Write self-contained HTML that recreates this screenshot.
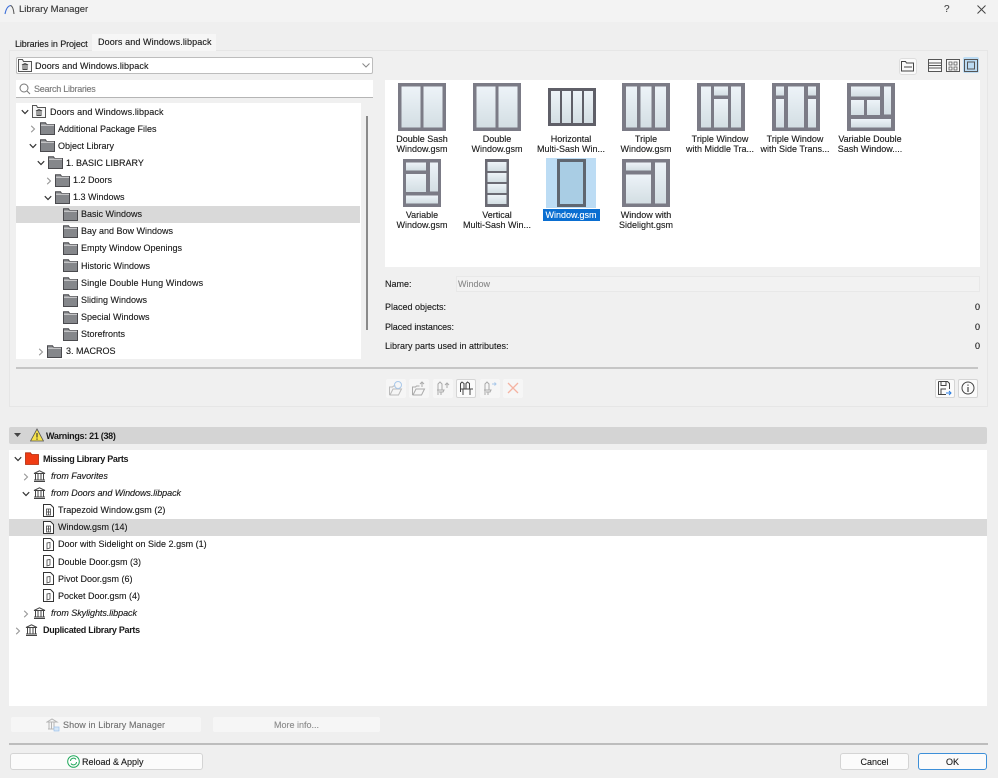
<!DOCTYPE html>
<html><head><meta charset="utf-8"><style>
html,body{margin:0;padding:0}
body{width:998px;height:778px;position:relative;overflow:hidden;background:#efefef;font:9px "Liberation Sans",sans-serif;color:#181818}
#r{position:absolute;left:0;top:0;width:998px;height:778px;overflow:hidden;filter:blur(.35px)}
.a,.t,svg.i{position:absolute}
.t{white-space:nowrap;line-height:12px;height:12px;-webkit-text-stroke:.12px currentColor}
.c{text-align:center;width:74px}
.d{color:#8a8a8a}
.b{font-weight:bold;letter-spacing:-.3px;-webkit-text-stroke:0}
.w{letter-spacing:.1px}
.btn{position:absolute;box-sizing:border-box;background:#fbfbfb;border:1px solid #d4d4d4;border-radius:3px;text-align:center;line-height:14px}
.tb{position:absolute;box-sizing:border-box;width:20px;height:19px;top:379px;background:#f6f6f6;border-radius:2px}
</style></head><body>
<svg width="0" height="0" style="position:absolute"><defs>
<linearGradient id="g" x1="0" y1="0" x2="0" y2="1"><stop offset="0" stop-color="#edf3f8"/><stop offset="1" stop-color="#d3dee3"/></linearGradient>
<symbol id="f" viewBox="0 0 15 13"><path d="M.5 12.500V.8h5l1.200 1.700h7.800v10z" fill="#85878b" stroke="#4a4a4e"/><path d="M1 3.200h13" stroke="#dfdfdf"/></symbol>
<symbol id="lib" viewBox="0 0 14 13"><path d="M.5 12.500V.5h4l1 2h8v10z" fill="#f7f7f7" stroke="#555"/><path d="M4 6l3-1.500L10 6zM4.500 10.500h5M5 7v3M7 7v3M9 7v3" fill="none" stroke="#444"/></symbol>
<symbol id="bank" viewBox="0 0 13 12"><path d="M1 3.500L6.500 .8 12 3.500zM1 11.500h11M1 10h11M2.500 4v6M5 4v6M8 4v6M10.500 4v6" fill="none" stroke="#444"/></symbol>
<symbol id="doc" viewBox="0 0 11 13"><path d="M.5 .5h7l3 3v9H.5z" fill="#fff" stroke="#333"/><path d="M3.500 5h4v6h-4zM5.500 5v6M3.500 8h4" fill="none" stroke="#444" stroke-width=".8"/></symbol>
<symbol id="dc" viewBox="0 0 11 13"><path d="M.5 .5h7l3 3v9H.5z" fill="#fff" stroke="#333"/><path d="M4 11V5l3-.5V10z" fill="none" stroke="#444" stroke-width=".8"/></symbol>
<symbol id="down" viewBox="0 0 8 6"><path d="M.8 1.200L4 4.500l3.200-3.300" fill="none" stroke="#333" stroke-width="1.200"/></symbol>
<symbol id="right" viewBox="0 0 6 8"><path d="M1.200 .8L4.500 4 1.200 7.200" fill="none" stroke="#999" stroke-width="1.100"/></symbol>
<symbol id="w1" viewBox="0 0 48 48"><rect width="48" height="48" fill="#7b7b86"/><rect x="3.500" y="3.500" width="19" height="41" fill="url(#g)"/><rect x="25.500" y="3.500" width="19" height="41" fill="url(#g)"/></symbol>
<symbol id="w3" viewBox="0 0 48 38"><rect width="48" height="38" fill="#5f5f68"/><rect x="3" y="3" width="9" height="32" fill="url(#g)"/><rect x="14" y="3" width="9" height="32" fill="url(#g)"/><rect x="25" y="3" width="9" height="32" fill="url(#g)"/><rect x="36" y="3" width="9" height="32" fill="url(#g)"/></symbol>
<symbol id="w4" viewBox="0 0 48 48"><rect width="48" height="48" fill="#7b7b86"/><rect x="4" y="3.500" width="11" height="41" fill="url(#g)"/><rect x="18.500" y="3.500" width="11" height="41" fill="url(#g)"/><rect x="33" y="3.500" width="11" height="41" fill="url(#g)"/></symbol>
<symbol id="w5" viewBox="0 0 48 48"><rect width="48" height="48" fill="#7b7b86"/><rect x="4" y="3.500" width="10" height="41" fill="url(#g)"/><rect x="17" y="3.500" width="14" height="9" fill="url(#g)"/><rect x="17" y="16" width="14" height="28.500" fill="url(#g)"/><rect x="34" y="3.500" width="10" height="41" fill="url(#g)"/></symbol>
<symbol id="w6" viewBox="0 0 48 48"><rect width="48" height="48" fill="#7b7b86"/><rect x="4" y="3.500" width="8" height="9" fill="url(#g)"/><rect x="4" y="16" width="8" height="28.500" fill="url(#g)"/><rect x="16" y="3.500" width="16" height="41" fill="url(#g)"/><rect x="36" y="3.500" width="8" height="9" fill="url(#g)"/><rect x="36" y="16" width="8" height="28.500" fill="url(#g)"/></symbol>
<symbol id="w7" viewBox="0 0 48 48"><rect width="48" height="48" fill="#7b7b86"/><rect x="4" y="3.500" width="29" height="10" fill="url(#g)"/><rect x="37" y="3.500" width="7" height="28" fill="url(#g)"/><rect x="4" y="17" width="13" height="15" fill="url(#g)"/><rect x="20" y="17" width="13" height="15" fill="url(#g)"/><rect x="4" y="36" width="40" height="8.500" fill="url(#g)"/></symbol>
<symbol id="w8" viewBox="0 0 38 48"><rect width="38" height="48" fill="#7b7b86"/><rect x="3" y="3.500" width="20" height="8" fill="url(#g)"/><rect x="27" y="3.500" width="8" height="29" fill="url(#g)"/><rect x="3" y="15" width="20" height="18" fill="url(#g)"/><rect x="3" y="36.500" width="32" height="8" fill="url(#g)"/></symbol>
<symbol id="w9" viewBox="0 0 24 48"><rect width="24" height="48" fill="#6a6a73"/><rect x="2.500" y="3" width="19" height="9" fill="url(#g)"/><rect x="2.500" y="14" width="19" height="9" fill="url(#g)"/><rect x="2.500" y="25" width="19" height="9" fill="url(#g)"/><rect x="2.500" y="36" width="19" height="9" fill="url(#g)"/></symbol>
<symbol id="w11" viewBox="0 0 48 48"><rect width="48" height="48" fill="#7b7b86"/><rect x="4" y="3.500" width="25" height="8" fill="url(#g)"/><rect x="33" y="3.500" width="11" height="41" fill="url(#g)"/><rect x="4" y="15.500" width="25" height="29" fill="url(#g)"/></symbol>
</defs></svg>
<div id="r">
<!-- title bar -->
<div class="a" style="left:0;top:0;width:998px;height:22px;background:#f3f3f3"></div>
<svg class="i" style="left:4px;top:4px" width="11" height="11" viewBox="0 0 11 11"><path d="M1 10C2 5 4 2 6.500 1.500" fill="none" stroke="#3d6fd8" stroke-width="1.100"/><path d="M6.500 1.500C8.500 2 9.500 5 10 10" fill="none" stroke="#555" stroke-width="1"/></svg>
<div class="t" style="left:19px;top:4px;color:#333;font-size:9.500px">Library Manager</div>
<div class="t" style="left:944px;top:4px;font-size:10px;color:#444">?</div>
<svg class="i" style="left:977px;top:5px" width="9" height="9" viewBox="0 0 9 9"><path d="M.5 .5l8 8M8.500 .5l-8 8" stroke="#444" fill="none"/></svg>

<!-- tabs & upper panel -->
<div class="a" style="left:9px;top:50px;width:979px;height:357px;box-sizing:border-box;background:#f0f0f0;border:1px solid #e6e6e6"></div>
<div class="a" style="left:92px;top:34px;width:124px;height:17px;background:#f6f6f6"></div>
<div class="t" style="left:15px;top:38px;letter-spacing:-.1px">Libraries in Project</div>
<div class="t w" style="left:98px;top:36px">Doors and Windows.libpack</div>

<!-- dropdown -->
<div class="a" style="left:16px;top:57px;width:357px;height:17px;box-sizing:border-box;background:#fff;border:1px solid #bdbdbd;border-radius:2px"></div>
<svg class="i" style="left:18px;top:59px" width="14" height="13"><use href="#lib"/></svg>
<div class="t w" style="left:35px;top:60px">Doors and Windows.libpack</div>
<svg class="i" style="left:362px;top:63px" width="8" height="5" viewBox="0 0 8 5"><path d="M.5 .5L4 4 7.500 .5" fill="none" stroke="#888"/></svg>

<!-- search -->
<div class="a" style="left:16px;top:80px;width:357px;height:18px;box-sizing:border-box;background:#fff;border-bottom:1px solid #b5b5b5"></div>
<svg class="i" style="left:19px;top:83px" width="12" height="12" viewBox="0 0 12 12"><circle cx="5" cy="5" r="4" fill="none" stroke="#777"/><path d="M8 8l3 3" stroke="#777"/></svg>
<div class="t" style="left:34px;top:83px;color:#777;letter-spacing:-.25px">Search Libraries</div>

<!-- tree -->
<div class="a" style="left:16px;top:103px;width:345px;height:256px;background:#fff"></div>
<div class="a" style="left:16px;top:206px;width:344px;height:17px;background:#d9d9d9"></div>
<div class="a" style="left:366px;top:116px;width:2px;height:214px;background:#8a8a8a"></div>

<svg class="i" style="left:21px;top:109px" width="8" height="6"><use href="#down"/></svg>
<svg class="i" style="left:32px;top:105px" width="14" height="13"><use href="#lib"/></svg>
<div class="t w" style="left:50px;top:106px">Doors and Windows.libpack</div>

<svg class="i" style="left:30px;top:125px" width="6" height="8"><use href="#right"/></svg>
<svg class="i" style="left:40px;top:122px" width="15" height="13"><use href="#f"/></svg>
<div class="t" style="left:58px;top:123px">Additional Package Files</div>

<svg class="i" style="left:29px;top:143px" width="8" height="6"><use href="#down"/></svg>
<svg class="i" style="left:40px;top:139px" width="15" height="13"><use href="#f"/></svg>
<div class="t" style="left:58px;top:140px">Object Library</div>

<svg class="i" style="left:37px;top:160px" width="8" height="6"><use href="#down"/></svg>
<svg class="i" style="left:48px;top:156px" width="15" height="13"><use href="#f"/></svg>
<div class="t" style="left:66px;top:157px">1. BASIC LIBRARY</div>

<svg class="i" style="left:46px;top:177px" width="6" height="8"><use href="#right"/></svg>
<svg class="i" style="left:55px;top:174px" width="15" height="13"><use href="#f"/></svg>
<div class="t" style="left:73px;top:174px">1.2 Doors</div>

<svg class="i" style="left:44px;top:195px" width="8" height="6"><use href="#down"/></svg>
<svg class="i" style="left:55px;top:191px" width="15" height="13"><use href="#f"/></svg>
<div class="t" style="left:73px;top:191px">1.3 Windows</div>

<svg class="i" style="left:63px;top:208px" width="15" height="13"><use href="#f"/></svg>
<div class="t" style="left:81px;top:208px">Basic Windows</div>
<svg class="i" style="left:63px;top:225px" width="15" height="13"><use href="#f"/></svg>
<div class="t" style="left:81px;top:225px">Bay and Bow Windows</div>
<svg class="i" style="left:63px;top:242px" width="15" height="13"><use href="#f"/></svg>
<div class="t" style="left:81px;top:242px">Empty Window Openings</div>
<svg class="i" style="left:63px;top:259px" width="15" height="13"><use href="#f"/></svg>
<div class="t" style="left:81px;top:260px">Historic Windows</div>
<svg class="i" style="left:63px;top:277px" width="15" height="13"><use href="#f"/></svg>
<div class="t" style="left:81px;top:277px;letter-spacing:.12px">Single Double Hung Windows</div>
<svg class="i" style="left:63px;top:294px" width="15" height="13"><use href="#f"/></svg>
<div class="t" style="left:81px;top:294px">Sliding Windows</div>
<svg class="i" style="left:63px;top:311px" width="15" height="13"><use href="#f"/></svg>
<div class="t" style="left:81px;top:311px">Special Windows</div>
<svg class="i" style="left:63px;top:328px" width="15" height="13"><use href="#f"/></svg>
<div class="t" style="left:81px;top:328px">Storefronts</div>
<svg class="i" style="left:38px;top:348px" width="6" height="8"><use href="#right"/></svg>
<svg class="i" style="left:47px;top:345px" width="15" height="13"><use href="#f"/></svg>
<div class="t" style="left:66px;top:345px">3. MACROS</div>

<!-- right toolbar -->
<div class="a" style="left:899px;top:58px;width:16px;height:15px;background:#fafafa;border-radius:3px;border:1px solid #ddd"></div>
<svg class="i" style="left:901px;top:60px" width="13" height="12" viewBox="0 0 13 12"><path d="M.5 11V1.500h4l1 1.500h7v8zM3 7h8" fill="none" stroke="#444"/></svg>
<svg class="i" style="left:928px;top:59px" width="14" height="13" viewBox="0 0 14 13"><rect x=".5" y=".5" width="13" height="12" fill="#fafafa" stroke="#555"/><path d="M1 4h12M1 6.500h12M1 9h12" stroke="#555"/></svg>
<svg class="i" style="left:946px;top:59px" width="14" height="13" viewBox="0 0 14 13"><rect x=".5" y=".5" width="13" height="12" fill="#fafafa" stroke="#555"/><path d="M3 3h3v3H3zM8 3h3v3H8zM3 8h3v3H3zM8 8h3v3H8z" fill="none" stroke="#555" stroke-width=".8"/></svg>
<div class="a" style="left:963px;top:57px;width:16px;height:16px;background:#bcdcf4;border-radius:2px"></div>
<svg class="i" style="left:964px;top:59px" width="14" height="13" viewBox="0 0 14 13"><rect x=".5" y=".5" width="13" height="12" fill="none" stroke="#555"/><rect x="3.500" y="3" width="7" height="7" fill="none" stroke="#555"/></svg>

<!-- thumbnails -->
<div class="a" style="left:385px;top:80px;width:595px;height:187px;background:#fff"></div>
<svg class="i" style="left:398px;top:83px" width="48" height="48"><use href="#w1"/></svg>
<svg class="i" style="left:473px;top:83px" width="48" height="48"><use href="#w1"/></svg>
<svg class="i" style="left:548px;top:88px" width="48" height="38"><use href="#w3"/></svg>
<svg class="i" style="left:622px;top:83px" width="48" height="48"><use href="#w4"/></svg>
<svg class="i" style="left:697px;top:83px" width="48" height="48"><use href="#w5"/></svg>
<svg class="i" style="left:772px;top:83px" width="48" height="48"><use href="#w6"/></svg>
<svg class="i" style="left:847px;top:83px" width="48" height="48"><use href="#w7"/></svg>
<svg class="i" style="left:403px;top:159px" width="38" height="48"><use href="#w8"/></svg>
<svg class="i" style="left:485px;top:159px" width="24" height="48"><use href="#w9"/></svg>
<div class="a" style="left:546px;top:158px;width:50px;height:50px;background:#bcdcf4"></div>
<svg class="i" style="left:557px;top:159px" width="29" height="48" viewBox="0 0 29 48"><rect width="29" height="48" fill="#5f6670"/><rect x="3" y="3" width="23" height="42" fill="#a9cde4"/></svg>
<svg class="i" style="left:622px;top:159px" width="48" height="48"><use href="#w11"/></svg>

<div class="t c" style="left:385px;top:133px">Double Sash</div><div class="t c" style="left:385px;top:143px">Window.gsm</div>
<div class="t c" style="left:460px;top:133px">Double</div><div class="t c" style="left:460px;top:143px">Window.gsm</div>
<div class="t c" style="left:534px;top:133px">Horizontal</div><div class="t c" style="left:534px;top:143px">Multi-Sash Win...</div>
<div class="t c" style="left:609px;top:133px">Triple</div><div class="t c" style="left:609px;top:143px">Window.gsm</div>
<div class="t c" style="left:683px;top:133px">Triple Window</div><div class="t c" style="left:683px;top:143px">with Middle Tra...</div>
<div class="t c" style="left:758px;top:133px">Triple Window</div><div class="t c" style="left:758px;top:143px">with Side Trans...</div>
<div class="t c" style="left:833px;top:133px">Variable Double</div><div class="t c" style="left:833px;top:143px">Sash Window....</div>
<div class="t c" style="left:385px;top:209px">Variable</div><div class="t c" style="left:385px;top:219px">Window.gsm</div>
<div class="t c" style="left:460px;top:209px">Vertical</div><div class="t c" style="left:460px;top:219px">Multi-Sash Win...</div>
<div class="a" style="left:543px;top:209px;width:57px;height:12px;background:#0a6ed1"></div>
<div class="t c" style="left:534px;top:209px;color:#fff">Window.gsm</div>
<div class="t c" style="left:609px;top:209px">Window with</div><div class="t c" style="left:609px;top:219px">Sidelight.gsm</div>

<!-- details -->
<div class="t" style="left:385px;top:278px">Name:</div>
<div class="a" style="left:456px;top:276px;width:524px;height:16px;box-sizing:border-box;background:#f2f2f2;border:1px solid #e8e8e8"></div>
<div class="t d" style="left:458px;top:278px">Window</div>
<div class="t" style="left:385px;top:301px">Placed objects:</div>
<div class="t" style="left:385px;top:321px;letter-spacing:-.1px">Placed instances:</div>
<div class="t" style="left:385px;top:340px">Library parts used in attributes:</div>
<div class="t" style="left:975px;top:301px">0</div>
<div class="t" style="left:975px;top:321px">0</div>
<div class="t" style="left:975px;top:340px">0</div>

<div class="a" style="left:16px;top:367px;width:962px;height:2px;background:#c6c6c6"></div>

<!-- toolbar -->
<div class="tb" style="left:386px"></div>
<svg class="i" style="left:389px;top:381px" width="14" height="15" viewBox="0 0 14 15"><path d="M.5 14V6h3l1-1h2M.5 14h9l3-6H4l-3 6" fill="none" stroke="#bbb"/><circle cx="9" cy="4" r="3.500" fill="none" stroke="#a9c8ea"/></svg>
<div class="tb" style="left:409px"></div>
<svg class="i" style="left:412px;top:381px" width="14" height="15" viewBox="0 0 14 15"><path d="M.5 14V6h3l1-1h3M.5 14h9l3-6H4l-3 6M10 6V1M8 3l2-2 2 2" fill="none" stroke="#aaa"/></svg>
<div class="tb" style="left:433px"></div>
<svg class="i" style="left:436px;top:381px" width="14" height="15" viewBox="0 0 14 15"><path d="M2 14V3l2-2 2 2v6M1 9h7l-1 2H3M5 11v3M11 7V2M9 4l2-2 2 2" fill="none" stroke="#aaa"/></svg>
<div class="tb" style="left:456px;background:#fbfbfb;border:1px solid #d5d5d5"></div>
<svg class="i" style="left:459px;top:381px" width="15" height="15" viewBox="0 0 15 15"><path d="M1.500 11V2.500L3 1l2 1.500V8M7 8V2.500L8.500 1l2 1.500V8M1 8h6M4 8v6M7 8h7M11 8v6" fill="none" stroke="#444"/></svg>
<div class="tb" style="left:480px"></div>
<svg class="i" style="left:483px;top:381px" width="14" height="15" viewBox="0 0 14 15"><path d="M2 14V3l2-2 2 2v6M1 9h7l-1 2H3M5 11v3" fill="none" stroke="#aaa"/><path d="M9 3h4M11.500 1.500L13 3l-1.500 1.500" fill="none" stroke="#a9c8ea"/></svg>
<div class="tb" style="left:503px"></div>
<svg class="i" style="left:507px;top:382px" width="12" height="12" viewBox="0 0 12 12"><path d="M1 1l10 10M11 1L1 11" stroke="#f4b3a2" stroke-width="1.300" fill="none"/></svg>

<div class="tb" style="left:935px;background:#fbfbfb;border:1px solid #d5d5d5"></div>
<svg class="i" style="left:938px;top:381px" width="14" height="15" viewBox="0 0 14 15"><path d="M.5 .5h9l2 2V8M.5 .5v13H8M3 .5v4h5v-4M3 13.500V8h5" fill="none" stroke="#444"/><path d="M8 12h5M11 10l2 2-2 2" fill="none" stroke="#2b7de0"/></svg>
<div class="tb" style="left:958px;background:#fbfbfb;border:1px solid #d5d5d5"></div>
<svg class="i" style="left:961px;top:381px" width="14" height="14" viewBox="0 0 14 14"><circle cx="7" cy="7" r="6" fill="none" stroke="#444"/><path d="M7 6v5M7 3.500v1.300" stroke="#444" stroke-width="1.200"/></svg>

<!-- warnings -->
<div class="a" style="left:9px;top:427px;width:978px;height:17px;background:#d4d4d4;border-radius:2px"></div>
<svg class="i" style="left:14px;top:433px" width="7" height="5" viewBox="0 0 7 5"><path d="M0 0h7L3.500 4z" fill="#444"/></svg>
<svg class="i" style="left:30px;top:428px" width="14" height="14" viewBox="0 0 14 14"><path d="M7 1l6.500 12H.5z" fill="#f6e24a" stroke="#555" stroke-width=".8"/><path d="M7 5v4.500M7 10.500v1.300" stroke="#222"/></svg>
<div class="t b" style="left:46px;top:430px">Warnings: 21 (38)</div>

<div class="a" style="left:9px;top:450px;width:978px;height:256px;background:#fff"></div>
<div class="a" style="left:9px;top:519px;width:978px;height:17px;background:#d9d9d9"></div>

<svg class="i" style="left:14px;top:456px" width="8" height="6"><use href="#down"/></svg>
<svg class="i" style="left:25px;top:452px" width="14" height="13" viewBox="0 0 14 13"><path d="M.5 12.500V.8h5l1.200 1.700h6.800v10z" fill="#f03c14" stroke="#b02808" stroke-width=".8"/></svg>
<div class="t b" style="left:43px;top:453px">Missing Library Parts</div>

<svg class="i" style="left:23px;top:473px" width="6" height="8"><use href="#right"/></svg>
<svg class="i" style="left:33px;top:470px" width="13" height="12"><use href="#bank"/></svg>
<div class="t" style="left:51px;top:470px;font-style:italic;letter-spacing:-.05px">from Favorites</div>
<svg class="i" style="left:22px;top:491px" width="8" height="6"><use href="#down"/></svg>
<svg class="i" style="left:33px;top:487px" width="13" height="12"><use href="#bank"/></svg>
<div class="t" style="left:51px;top:487px;font-style:italic;letter-spacing:-.05px">from Doors and Windows.libpack</div>

<svg class="i" style="left:43px;top:504px" width="11" height="13"><use href="#doc"/></svg>
<div class="t" style="left:58px;top:504px;letter-spacing:.03px">Trapezoid Window.gsm (2)</div>
<svg class="i" style="left:43px;top:521px" width="11" height="13"><use href="#doc"/></svg>
<div class="t" style="left:58px;top:521px">Window.gsm (14)</div>
<svg class="i" style="left:43px;top:538px" width="11" height="13"><use href="#dc"/></svg>
<div class="t" style="left:58px;top:538px">Door with Sidelight on Side 2.gsm (1)</div>
<svg class="i" style="left:43px;top:555px" width="11" height="13"><use href="#dc"/></svg>
<div class="t" style="left:58px;top:556px">Double Door.gsm (3)</div>
<svg class="i" style="left:43px;top:572px" width="11" height="13"><use href="#dc"/></svg>
<div class="t" style="left:58px;top:573px">Pivot Door.gsm (6)</div>
<svg class="i" style="left:43px;top:589px" width="11" height="13"><use href="#dc"/></svg>
<div class="t" style="left:58px;top:590px">Pocket Door.gsm (4)</div>

<svg class="i" style="left:23px;top:610px" width="6" height="8"><use href="#right"/></svg>
<svg class="i" style="left:33px;top:607px" width="13" height="12"><use href="#bank"/></svg>
<div class="t" style="left:51px;top:607px;font-style:italic;letter-spacing:-.05px">from Skylights.libpack</div>
<svg class="i" style="left:15px;top:627px" width="6" height="8"><use href="#right"/></svg>
<svg class="i" style="left:25px;top:624px" width="13" height="12"><use href="#bank"/></svg>
<div class="t b" style="left:43px;top:624px">Duplicated Library Parts</div>

<!-- bottom -->
<div class="btn" style="left:10px;top:716px;width:192px;height:17px;background:#f6f6f6;border-color:#efefef"></div>
<svg class="i" style="left:46px;top:718px" width="14" height="14" viewBox="0 0 14 14"><path d="M1 4L6 1l5 3zM2 11h8M3 4v7M5.500 4v7M8 4v7" fill="none" stroke="#b5b5b5"/><rect x="8" y="9" width="5" height="4" fill="#d5e6f7" stroke="#9cc0e8" stroke-width=".7"/></svg>
<div class="t" style="left:63px;top:719px;color:#707070;letter-spacing:.09px">Show in Library Manager</div>
<div class="btn" style="left:212px;top:716px;width:169px;height:17px;background:#f6f6f6;border-color:#efefef"></div>
<div class="t" style="left:212px;top:719px;width:169px;text-align:center;color:#8a8a8a">More info...</div>
<div class="a" style="left:9px;top:743px;width:979px;height:2px;background:#bdbdbd"></div>
<div class="btn" style="left:10px;top:753px;width:193px;height:17px"></div>
<svg class="i" style="left:67px;top:755px" width="13" height="13" viewBox="0 0 13 13"><circle cx="6.500" cy="6.500" r="5.800" fill="#fff" stroke="#1fa85a"/><path d="M3.500 6a3 3 0 0 1 5.500-1.500M9.500 7a3 3 0 0 1-5.500 1.500" fill="none" stroke="#1fa85a"/></svg>
<div class="t" style="left:82px;top:756px">Reload &amp; Apply</div>
<div class="btn" style="left:840px;top:753px;width:69px;height:17px"></div>
<div class="t" style="left:840px;top:756px;width:69px;text-align:center">Cancel</div>
<div class="btn" style="left:918px;top:753px;width:69px;height:17px;border-color:#3d8fd8"></div>
<div class="t" style="left:918px;top:756px;width:69px;text-align:center">OK</div>
</div>
</body></html>
